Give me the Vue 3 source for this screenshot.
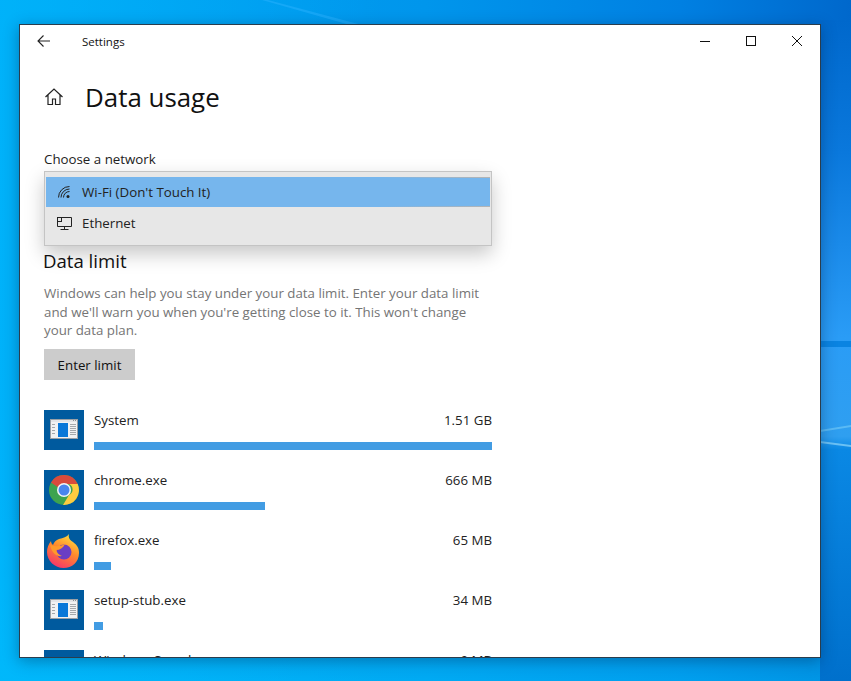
<script setup>
const apps = [
  { name: 'System', size: '1.51 GB', width: 398, icon: 'window' },
  { name: 'chrome.exe', size: '666 MB', width: 171, icon: 'chrome' },
  { name: 'firefox.exe', size: '65 MB', width: 17, icon: 'firefox' },
  { name: 'setup-stub.exe', size: '34 MB', width: 9, icon: 'window' },
  { name: 'Windows Search', size: '9 MB', width: 4, icon: 'window' }
]
</script>

<template>
  <div class="desktop">
    <svg class="streaks" width="851" height="681" viewBox="0 0 851 681">
      <defs>
        <linearGradient id="strip" x1="0" y1="0" x2="0" y2="1">
          <stop offset="0" stop-color="#0068cc" />
          <stop offset=".2" stop-color="#0a78dc" />
          <stop offset=".48" stop-color="#2a9cf6" />
          <stop offset=".63" stop-color="#2f9ff0" />
          <stop offset=".65" stop-color="#0a88e4" />
          <stop offset="1" stop-color="#0070cc" />
        </linearGradient>
      </defs>
      <path d="M268 0 L362 25 L350 25 L262 0 Z" fill="#2fb4ff" opacity=".45" />
      <rect x="820" y="20" width="31" height="661" fill="url(#strip)" />
      <rect x="820" y="341" width="31" height="6" fill="#0a84e2" />
      <path d="M820 430 L851 425 L851 427 L820 432 Z" fill="#6cc6f6" opacity=".7" />
      <path d="M820 441 L851 445 L851 447 L820 443 Z" fill="#8fd6f9" opacity=".7" />
    </svg>
    <main class="window">
      <header class="titlebar">
        <svg class="back" width="16" height="14" viewBox="0 0 16 14">
          <path d="M14 7H2M7.500 1.500 2 7l5.500 5.500" fill="none" stroke="#222" stroke-width="1.100" />
        </svg>
        <span class="app-name">Settings</span>
        <div class="controls">
          <svg width="12" height="12" viewBox="0 0 12 12"><path d="M1 6.500h10" stroke="#111" fill="none" /></svg>
          <svg width="12" height="12" viewBox="0 0 12 12"><rect x="1.500" y="1.500" width="9" height="9" stroke="#111" fill="none" /></svg>
          <svg width="12" height="12" viewBox="0 0 12 12"><path d="M1 1l10 10M11 1 1 11" stroke="#111" fill="none" /></svg>
        </div>
      </header>

      <section class="content">
        <div class="page-head">
          <svg width="20" height="20" viewBox="0 0 20 20">
            <path d="M1.500 10 10 2l8.500 8M4 8v9.500h4.500v-5.500h3v5.500H16V8" fill="none" stroke="#222" stroke-width="1.200" />
          </svg>
          <h1>Data usage</h1>
        </div>

        <label class="field-label">Choose a network</label>
        <div class="dropdown-wrap">
          <div class="dropdown">
            <div class="option selected">
              <svg width="16" height="16" viewBox="0 0 16 16">
                <g fill="none" stroke="#222" stroke-width="1">
                  <path d="M2.500 13.500A11 11 0 0 1 13.500 2.500" />
                  <path d="M5 13.500A8.500 8.500 0 0 1 13.500 5" />
                  <path d="M7.500 13.500A6 6 0 0 1 13.500 7.500" />
                </g>
                <circle cx="12" cy="12.500" r="1.500" fill="#222" />
              </svg>
              <span>Wi-Fi (Don't Touch It)</span>
            </div>
            <div class="option">
              <svg width="16" height="16" viewBox="0 0 16 16">
                <g fill="none" stroke="#222" stroke-width="1">
                  <path d="M5.500 2.500H15.500V11.500H1.500V2.500H5.500" />
                  <rect x="1.500" y="2.500" width="4" height="4" fill="#e6e6e6" />
                  <path d="M8.500 11.500V14.500M4.500 14.500H12.500" />
                </g>
              </svg>
              <span>Ethernet</span>
            </div>
          </div>
        </div>

        <h2>Data limit</h2>
        <p class="hint">Windows can help you stay under your data limit. Enter your data limit and we'll warn you when you're getting close to it. This won't change your data plan.</p>
        <button class="limit-btn">Enter limit</button>

        <ul class="apps">
          <li v-for="app in apps" :key="app.name" class="app">
            <div class="tile">
              <svg v-if="app.icon === 'window'" width="40" height="40" viewBox="0 0 40 40">
                <rect x="6.500" y="9.500" width="27" height="19" fill="#f1f2f3" stroke="#9aa0a6" />
                <path d="M7 10.500h26v1H7z" fill="#d6d8da" />
                <path d="M29 10.500h1M31 10.500h1" stroke="#8a8f94" />
                <rect x="14" y="13" width="10" height="14" fill="#0a78d8" />
                <path d="M8 14.500h3M8 17.500h3M8 20.500h3M8 23.500h3" stroke="#a4a8ac" />
                <path d="M26 14.500h6M26 16.500h6M26 18.500h6M26 20.500h6M26 22.500h6M26 24.500h6" stroke="#a4a8ac" />
              </svg>
              <svg v-else-if="app.icon === 'chrome'" width="40" height="40" viewBox="0 0 40 40">
                <circle cx="20" cy="20" r="15" fill="#3da34f" />
                <path d="M7 12.500A15 15 0 0 1 33.700 14H20a6 6 0 0 0-5.700 3.500Z" fill="#d94a3d" />
                <path d="M33.700 14A15 15 0 0 1 19 35l6-10a6 6 0 0 0 0-11Z" fill="#fdcb41" />
                <circle cx="20" cy="20" r="7" fill="#f4f5f6" />
                <circle cx="20" cy="20" r="5.500" fill="#4a86ee" />
              </svg>
              <svg v-else width="40" height="40" viewBox="0 0 40 40">
                <defs>
                  <linearGradient id="fox" x1="0.750" y1="0" x2="0.250" y2="1">
                    <stop offset="0" stop-color="#ffdf3f" />
                    <stop offset=".45" stop-color="#ff8a2c" />
                    <stop offset="1" stop-color="#f5306e" />
                  </linearGradient>
                </defs>
                <path d="M25 4c-1 4 1 6 4 8 4 3 6 6 6 11 0 9-7 15-15.500 15S3 31 3 22c0-4 1.500-8 4-11 0 2 1 3 2 4 1-3 3-5 6-6 4-1 8-2 10-5Z" fill="url(#fox)" />
                <circle cx="20" cy="22" r="7.500" fill="#6a3ec4" />
                <path d="M6 14c3 3 9 3 15 0-2 4-5 6-9 6 1 3 3 5 6 6-6 1-11-4-12-12Z" fill="#ff9a2a" />
              </svg>
            </div>
            <div class="usage">
              <div class="usage-text"><span>{{ app.name }}</span><span>{{ app.size }}</span></div>
              <div class="bar" :style="{ width: app.width + 'px' }"></div>
            </div>
          </li>
        </ul>
      </section>
    </main>
  </div>
</template>

<style>
html, body { margin: 0; overflow: hidden; }
</style>

<style scoped>
.desktop {
  position: relative;
  box-sizing: border-box;
  width: 851px;
  height: 681px;
  padding: 24px 30px 23px 19px;
  font-family: "Open Sans", "Noto Sans", sans-serif;
  background:
    linear-gradient(90deg, rgba(0, 190, 255, .55) 0, rgba(0, 170, 250, 0) 45%),
    linear-gradient(180deg, rgba(0, 130, 230, 0) 0, rgba(0, 130, 230, 0) 70%, rgba(0, 190, 250, .5) 100%),
    linear-gradient(90deg, #00a3f3 0, #0096ec 50%, #0080e2 80%, #0068cc 100%);
}
.streaks { position: absolute; left: 0; top: 0; }
.window {
  position: relative;
  box-sizing: border-box;
  width: 802px;
  height: 634px;
  background: #fff;
  border: 1px solid #2a3d4d;
  overflow: hidden;
  box-shadow: 0 3px 14px rgba(0, 40, 80, .4);
}
.titlebar {
  display: flex;
  align-items: center;
  height: 32px;
  padding-left: 16px;
}
.back { margin-right: 30px; }
.app-name { font-size: 11.500px; color: #111; }
.controls {
  display: flex;
  gap: 34px;
  margin-left: auto;
  margin-right: 17px;
}
.content { padding: 0 0 0 24px; width: 448px; }
.page-head {
  display: flex;
  align-items: center;
  gap: 21px;
  height: 40px;
  margin-top: 20px;
}
.page-head h1 {
  margin: 0;
  font-size: 25.900px;
  font-weight: 400;
  color: #111;
}
.field-label {
  display: block;
  margin-top: 32px;
  height: 20px;
  font-size: 13.300px;
  line-height: 20px;
  color: #222;
}
.dropdown-wrap { position: relative; height: 70px; }
.dropdown {
  position: absolute;
  z-index: 2;
  top: 2px;
  left: 0;
  box-sizing: border-box;
  width: 448px;
  height: 75px;
  padding: 5px 1px;
  background: #e7e7e7;
  border: 1px solid #c4c4c4;
  box-shadow: 0 8px 18px rgba(0, 0, 0, .22);
}
.option {
  display: flex;
  align-items: center;
  gap: 10px;
  height: 30px;
  padding-left: 10px;
  font-size: 13.300px;
  color: #222;
}
.option.selected {
  margin-bottom: 1px;
  background:
    linear-gradient(90deg, transparent 75%, #b4b4b4 100%) top / 100% 1px no-repeat,
    linear-gradient(90deg, transparent 75%, #b4b4b4 100%) bottom / 100% 1px no-repeat,
    #76b6ed;
}
h2 {
  margin: 0 0 0 -1px;
  padding-top: 6px;
  height: 31px;
  box-sizing: content-box;
  font-size: 18.600px;
  line-height: 31px;
  font-weight: 400;
  color: #111;
}
.hint {
  margin: 8px 0 0;
  font-size: 13.300px;
  line-height: 18.500px;
  color: #757575;
}
.limit-btn {
  display: block;
  box-sizing: border-box;
  width: 91px;
  height: 31px;
  margin-top: 9px;
  padding: 2px 0 0;
  border: 0;
  background: #ccc;
  font: inherit;
  font-size: 13.300px;
  color: #111;
}
.apps { list-style: none; margin: 30px 0 0; padding: 0; }
.app {
  display: flex;
  gap: 10px;
  height: 40px;
  margin-bottom: 20px;
}
.tile { width: 40px; height: 40px; flex: none; background: #005a9e; }
.tile svg { display: block; }
.usage { flex: 1; display: flex; flex-direction: column; justify-content: space-between; }
.usage-text {
  display: flex;
  justify-content: space-between;
  height: 20px;
  font-size: 13.300px;
  line-height: 20px;
  color: #222;
}
.bar { height: 8px; background: #429ce3; }
</style>
